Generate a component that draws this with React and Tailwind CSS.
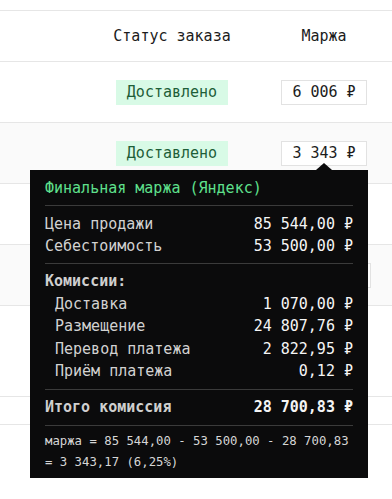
import React from 'react';

const mono = { fontFamily: '"DejaVu Sans Mono", "Liberation Mono", monospace' };

const rows = [
  { status: 'Доставлено', margin: '6 006 ₽' },
  { status: 'Доставлено', margin: '3 343 ₽', tip: true },
  { status: '', margin: '' },
  { status: '', margin: '12 480 ₽' },
  { status: '', margin: '', tall: true },
];

const Line = ({ label, value, indent, bold, lh = 'leading-[22.5px]' }) => (
  <div className={`flex justify-between ${lh} ${indent ? 'pl-[10px]' : ''}`}>
    <span className={`${bold ? 'font-bold text-[#cfcfcf]' : 'text-[#d2d2d2]'}`}>{label}</span>
    <span className={`${bold ? 'font-bold' : ''} text-[#f5f5f5]`}>{value}</span>
  </div>
);

const Tooltip = () => (
  <div className="absolute left-[30px] top-[170px] w-[338px] bg-[#0b0b0c] px-[15px] pt-[7px] pb-[5px] text-[15px] z-10">
    {/* arrow */}
    <div className="absolute -top-[7px] left-[286px] w-0 h-0 border-l-[8px] border-r-[8px] border-b-[7px] border-l-transparent border-r-transparent border-b-[#0b0b0c]" />
    <div className="leading-[22px] text-[#5fe08c]">Финальная маржа (Яндекс)</div>
    <div className="h-px bg-[#3b3b3b] mt-[6px] mb-[7px]" />
    <Line label="Цена продажи" value="85 544,00 ₽" lh="leading-[22px]" />
    <Line label="Себестоимость" value="53 500,00 ₽" lh="leading-[22px]" />
    <div className="h-px bg-[#3b3b3b] my-[6px]" />
    <div className="leading-[22.5px] font-bold text-[#cfcfcf]">Комиссии:</div>
    <Line label="Доставка" value="1 070,00 ₽" indent />
    <Line label="Размещение" value="24 807,76 ₽" indent />
    <Line label="Перевод платежа" value="2 822,95 ₽" indent />
    <Line label="Приём платежа" value="0,12 ₽" indent />
    <div className="h-px bg-[#3b3b3b] my-[6px]" />
    <Line label="Итого комиссия" value="28 700,83 ₽" bold lh="leading-[22px]" />
    <div className="h-px bg-[#3b3b3b] mt-[7px] mb-[5px]" />
    <div className="text-[12.3px] leading-[21px] text-[#d6d6d6] whitespace-nowrap">
      маржа = 85 544,00 - 53 500,00 - 28 700,83
      <br />= 3 343,17 (6,25%)
    </div>
  </div>
);

export default function App() {
  return (
    <div className="relative w-[392px] h-[499px] overflow-hidden bg-white text-[#1c1c1c]" style={mono}>
      <div className="w-[400px] pt-[10px]">
        <div className="flex h-[52px] items-center border-t border-b border-[#e6e6e6] text-[15px]">
          <div className="flex-1" />
          <div className="w-[152px] text-center">Статус заказа</div>
          <div className="w-[152px] text-center">Маржа</div>
        </div>
        {rows.map((r, i) => (
          <div
            key={i}
            className={`flex items-center border-b border-[#e6e6e6] text-[15px] ${r.tall ? 'h-[91px]' : 'h-[61px]'} ${i % 2 === 1 ? 'bg-[#fafafa]' : 'bg-white'}`}
          >
            <div className="flex-1" />
            <div className="w-[152px] flex justify-center">
              {r.status && (
                <span className="bg-[#d8fae6] text-[#1e5e38] px-[11px] h-[25px] w-[112px] flex items-center justify-center">
                  {r.status}
                </span>
              )}
            </div>
            <div className="w-[152px] flex justify-center">
              {r.margin && (
                <span className="border border-[#e2e2e2] bg-white px-[10px] h-[25px] flex items-center">
                  {r.margin}
                </span>
              )}
            </div>
          </div>
        ))}
        <div className="h-[28px] border-b border-[#e6e6e6]" />
      </div>
      <Tooltip />
    </div>
  );
}
